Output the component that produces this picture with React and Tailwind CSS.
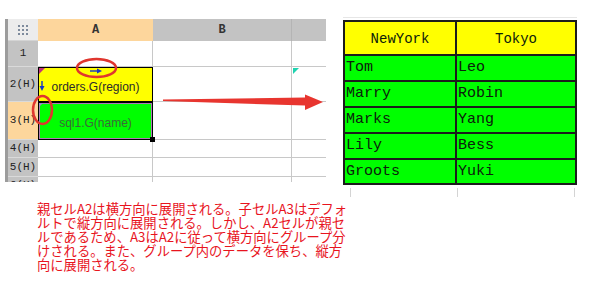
import React from 'react';

const rows = [
  { label: '1', h: 'h-[26px]' },
  { label: '2(H)', h: 'h-[35px]', cell: 'region' },
  { label: '3(H)', h: 'h-[38px]', cell: 'name', selected: true },
  { label: '4(H)', h: 'h-[18px]' },
  { label: '5(H)', h: 'h-[19px]' },
  { label: '6(H)', h: 'h-[18px]' },
];

const result = [
  ['Tom', 'Leo'],
  ['Marry', 'Robin'],
  ['Marks', 'Yang'],
  ['Lily', 'Bess'],
  ['Groots', 'Yuki'],
];

const note = [
  '親セルA2は横方向に展開される。子セルA3はデフォ',
  'ルトで縦方向に展開される。しかし、A2セルが親セ',
  'ルであるため、A3はA2に従って横方向にグループ分',
  'けされる。また、グループ内のデータを保ち、縦方',
  '向に展開される。',
];

const mono = { fontFamily: '"Liberation Mono", "DejaVu Sans Mono", monospace' };

const CornerDots = () => (
  <div className="grid grid-cols-3 gap-[2px]">
    {Array.from({ length: 9 }).map((_, i) => (
      <span key={i} className="w-[2px] h-[2px] bg-[#7d8a9c]" />
    ))}
  </div>
);

const Sheet = () => (
  <div className="mt-[19px] ml-[5px] flex">
    <div className="w-[3px] h-[163px] bg-[#9c9c9c]" />
    <div className="w-[318px] h-[163px] overflow-hidden">
      {/* column header */}
      <div className="flex h-[22px] text-[12px] text-[#333]" style={mono}>
        <div className="w-[30px] bg-[#ececec] border-b border-[#d4d4d4] flex items-center justify-center">
          <CornerDots />
        </div>
        <div className="w-[115px] bg-[#fdd69c] flex items-center justify-center font-bold">A</div>
        <div className="w-[139px] bg-[#c3c3c3] border-r border-[#b4b4b4] flex items-center justify-center font-bold">B</div>
        <div className="flex-1 bg-[#c3c3c3]" />
      </div>

      {rows.map((r) => (
        <div key={r.label} className={`flex ${r.h}`}>
          <div
            className={`w-[30px] border-b border-[#dadada] flex items-center justify-center text-[11px] text-[#222] ${
              r.selected ? 'bg-[#fdd69c]' : 'bg-[#c3c3c3]'
            }`}
            style={mono}
          >
            {r.label}
          </div>
          {r.cell === 'region' ? (
            <div
              className="w-[115px] bg-[#ffff00] border border-black flex items-center justify-center pt-[4px] text-[12px] text-[#2b2b2b]"
              style={{ fontFamily: '"Liberation Sans", Arial, sans-serif' }}
            >
              orders.G(region)
            </div>
          ) : r.cell === 'name' ? (
            <div
              className="relative w-[115px] bg-[#00ff00] border border-black shadow-[inset_0_0_0_1px_#b07ab4] flex items-center justify-center pt-[3px] text-[12px] text-[#3a6a3a]"
              style={{ fontFamily: '"Liberation Sans", Arial, sans-serif' }}
            >
              sql1.G(name)
              <span className="absolute right-[-3px] bottom-[-3px] w-[5px] h-[5px] bg-black" />
            </div>
          ) : (
            <div className="w-[115px] bg-white border-r border-b border-[#c8c8c8]" />
          )}
          <div className="w-[139px] bg-white border-r border-b border-[#c8c8c8]" />
          <div className="flex-1 bg-white border-b border-[#c8c8c8]" />
        </div>
      ))}
    </div>
  </div>
);

const ResultTable = () => (
  <div className="ml-[17px] mt-[20px] w-[234px] border-2 border-[#1c1c1c] grid grid-cols-[112px_1fr] text-[#0c200c]" style={mono}>
    <div className="h-[34px] bg-[#ffff00] border-r-2 border-b-2 border-[#1c1c1c] flex items-center justify-center pt-[2px] text-[14px]">NewYork</div>
    <div className="h-[34px] bg-[#ffff00] border-b-2 border-[#1c1c1c] flex items-center justify-center pt-[2px] text-[14px]">Tokyo</div>
    {result.map(([a, b], i) => {
      const last = i === result.length - 1;
      return (
        <React.Fragment key={a}>
          <div className={`${last ? 'h-[23px]' : 'h-[26px] border-b-2'} bg-[#00ff00] border-r-2 border-[#1c1c1c] flex items-center pl-[1px] pt-[1px] text-[15px]`}>{a}</div>
          <div className={`${last ? 'h-[23px]' : 'h-[26px] border-b-2'} bg-[#00ff00] border-[#1c1c1c] flex items-center pl-[1px] pt-[1px] text-[15px]`}>{b}</div>
        </React.Fragment>
      );
    })}
  </div>
);

const Overlay = () => (
  <svg className="absolute inset-0 pointer-events-none" width="610" height="297" viewBox="0 0 610 297">
    {/* cell markers */}
    <polygon points="39,68 45,68 39,74" fill="#c2307c" />
    <polygon points="39,103 43,103 39,107" fill="#a08cc8" />
    <polygon points="293,68 299,68 293,74" fill="#1fd3b0" />
    {/* blue expand arrows */}
    <line x1="90" y1="71" x2="98" y2="71" stroke="#1536c8" strokeWidth="1.4" />
    <polygon points="97,68.5 102,71 97,73.5" fill="#1536c8" />
    <line x1="42" y1="81" x2="42" y2="87" stroke="#1536c8" strokeWidth="1.4" />
    <polygon points="39.5,86 44.5,86 42,91" fill="#1536c8" />
    {/* red marks */}
    <ellipse cx="96.5" cy="68" rx="19.5" ry="9" fill="none" stroke="#e0362e" strokeWidth="2.5" />
    <ellipse cx="42.5" cy="110" rx="9.5" ry="14" fill="none" stroke="#e0362e" strokeWidth="2.5" />
    <polygon points="163,99.5 305,97.5 305,94.5 323,102 305,110 305,105.5 163,101" fill="#e8352f" />
    {/* faint grid remnants around result table */}
    <line x1="343" y1="17.5" x2="577" y2="17.5" stroke="#e6e6e6" />
    <line x1="350.5" y1="188" x2="350.5" y2="197" stroke="#d4d4d4" />
    <line x1="457.5" y1="188" x2="457.5" y2="197" stroke="#d4d4d4" />
    <line x1="574.5" y1="188" x2="574.5" y2="197" stroke="#d4d4d4" />
  </svg>
);

export default function App() {
  return (
    <div className="relative w-[610px] h-[297px] bg-white overflow-hidden">
      <div className="flex items-start h-[185px]">
        <Sheet />
        <ResultTable />
      </div>
      <div
        className="mt-[17px] pl-[37px] text-[13.3px] leading-[13.9px] text-[#e8141e]"
        style={{ fontFamily: '"Noto Sans CJK JP", sans-serif' }}
      >
        {note.map((line) => (
          <div key={line} className="whitespace-nowrap">{line}</div>
        ))}
      </div>
      <Overlay />
    </div>
  );
}
